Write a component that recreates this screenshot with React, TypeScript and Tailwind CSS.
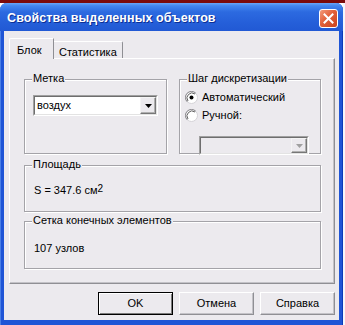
import React from "react";

const face = "bg-[#ECEAEE]";

function Group({
  label,
  className,
  children,
}: {
  label: string;
  className?: string;
  children?: React.ReactNode;
}) {
  return (
    <div
      className={`relative border border-[#a4a3a8] shadow-[inset_1px_1px_0_#ffffff,1px_1px_0_#ffffff] ${className ?? ""}`}
    >
      <span className={`absolute left-[7px] -top-[8px] px-[1px] leading-[13px] ${face}`}>{label}</span>
      {children}
    </div>
  );
}

function Arrow({ color = "#000" }: { color?: string }) {
  return (
    <svg width="7" height="4" viewBox="0 0 7 4">
      <polygon points="0,0 7,0 3.5,4" fill={color} />
    </svg>
  );
}

function Combo({
  value,
  disabled,
  className,
}: {
  value?: string;
  disabled?: boolean;
  className?: string;
}) {
  return (
    <div
      className={`flex border border-t-[#a0a0a0] border-l-[#a0a0a0] border-r-white border-b-white ${className ?? ""}`}
    >
      <div
        className={`flex flex-1 border border-t-[#6e6e6e] border-l-[#6e6e6e] border-r-[#e3e3e3] border-b-[#e3e3e3] ${
          disabled ? face : "bg-white"
        }`}
      >
        <div className="flex-1 pl-[2px] leading-[16px]">{value}</div>
        <div
          className={`w-[16px] flex items-center justify-center ${face} border border-t-[#f4f4f4] border-l-[#f4f4f4] border-r-[#777] border-b-[#777] shadow-[inset_-1px_-1px_0_#b0b0b0]`}
        >
          <Arrow color={disabled ? "#a0a0a0" : "#000"} />
        </div>
      </div>
    </div>
  );
}

function Radio({ checked }: { checked?: boolean }) {
  return (
    <svg width="13" height="13" viewBox="0 0 13 13">
      <circle cx="6.5" cy="6.5" r="6" fill="#ffffff" stroke="#d4d3d7" strokeWidth="1" />
      <path d="M2.2 10.8 A6 6 0 0 1 10.8 2.2" fill="none" stroke="#8a898d" strokeWidth="1" />
      <path d="M3 10 A5 5 0 0 1 10 3" fill="none" stroke="#606060" strokeWidth="1" />
      {checked && <circle cx="6.5" cy="6.5" r="2" fill="#000" />}
    </svg>
  );
}

function Button({ label, def }: { label: string; def?: boolean }) {
  return (
    <div
      className={`w-[75px] h-[23px] flex items-center justify-center ${face} ${
        def
          ? "border border-black shadow-[inset_1px_1px_0_#ffffff,inset_-1px_-1px_0_#7a7a7a]"
          : "border border-t-white border-l-white border-r-[#8f8f94] border-b-[#8f8f94] shadow-[inset_-1px_-1px_0_#c3c2c7]"
      }`}
    >
      {label}
    </div>
  );
}

export default function App() {
  return (
    <div
      className="w-[345px] h-[325px] overflow-hidden flex flex-col bg-[#ffffff] text-black text-[11px]"
      style={{ fontFamily: '"Liberation Sans", Arial, sans-serif' }}
    >
      <div className="h-[3px] w-[345px] shrink-0 bg-[#7b0a0a]" />
      <div className="flex">
        <div className="w-[343px] h-[325px] rounded-t-[7px] bg-[#1f55d6] flex flex-col px-[4px] shadow-[inset_1px_0_0_#4a7fe6,inset_-1px_0_0_#0a3ab8]">
          {/* title bar */}
          <div className="h-[28px] -mx-[4px] rounded-t-[7px] bg-[linear-gradient(180deg,#6aa6f6_0%,#4386ee_10%,#2c6ae0_32%,#255fd9_70%,#2159d4_100%)] flex items-center pl-[7px] pr-[5px] pt-[3px]">
            <div className="flex-1 text-white font-bold text-[12.5px] tracking-[0.1px] [text-shadow:1px_1px_0_#0c2f95]">
              Свойства выделенных объектов
            </div>
            <div className="w-[19px] h-[19px] rounded-[3px] border border-white bg-[linear-gradient(135deg,#f39a7a_0%,#e2603a_45%,#c9431e_100%)] flex items-center justify-center">
              <svg width="11" height="11" viewBox="0 0 11 11">
                <path d="M1.5 1.5 L9.5 9.5 M9.5 1.5 L1.5 9.5" stroke="#fff" strokeWidth="2" strokeLinecap="square" />
              </svg>
            </div>
          </div>
          {/* body */}
          <div className={`w-[335px] h-[289px] shrink-0 ${face} flex flex-col pl-[5px]`}>
            {/* tabs */}
            <div className="flex items-end mt-[7px] h-[20px]">
              <div className={`relative z-10 -mb-[1px] h-[21px] w-[45px] ${face} border-l border-t border-white border-r border-r-[#8f8f94] rounded-tl-[2px] pl-[7px] pt-[3px]`}>
                Блок
              </div>
              <div className={`h-[17px] w-[69px] ${face} border-t border-white border-r border-r-[#8f8f94] rounded-tr-[2px] pl-[5px] pt-[2px]`}>
                Статистика
              </div>
            </div>
            {/* panel */}
            <div className="w-[326px] h-[226px] border border-t-white border-l-white border-r-[#8f8f94] border-b-[#8f8f94] shadow-[inset_-1px_-1px_0_#c3c2c7] flex flex-col pt-[20px] pl-[14px]">
              <div className="flex gap-[12px]">
                <Group label="Метка" className="w-[143px] h-[75px] px-[8px] pt-[15px]">
                  <Combo value="воздух" className="h-[21px]" />
                </Group>
                <Group label="Шаг дискретизации" className="w-[142px] h-[75px] pl-[5px] pr-[11px] pt-[10px]">
                  <div className="flex items-center gap-[4px] h-[15px]">
                    <Radio checked />
                    <span>Автоматический</span>
                  </div>
                  <div className="flex items-center gap-[4px] mt-[3px] h-[15px]">
                    <Radio />
                    <span>Ручной:</span>
                  </div>
                  <Combo disabled className="ml-[14px] mt-[13px] h-[19px]" />
                </Group>
              </div>
              <Group label="Площадь" className="mt-[11px] w-[297px] h-[47px] pl-[9px] pt-[17px]">
                <div className="leading-[14px]">
                  S = 347.6 см<sup className="text-[10px] relative -top-[2px]">2</sup>
                </div>
              </Group>
              <Group label="Сетка конечных элементов" className="mt-[9px] w-[297px] h-[48px] pl-[9px] pt-[19px]">
                <div className="leading-[14px]">107 узлов</div>
              </Group>
            </div>
            {/* buttons */}
            <div className="flex justify-end gap-[6px] mt-[8px] w-[326px]">
              <Button label="OK" def />
              <Button label="Отмена" />
              <Button label="Справка" />
            </div>
          </div>
        </div>
        <div className="w-[2px] h-[325px] bg-[#f4f6fb]" />
      </div>
    </div>
  );
}
